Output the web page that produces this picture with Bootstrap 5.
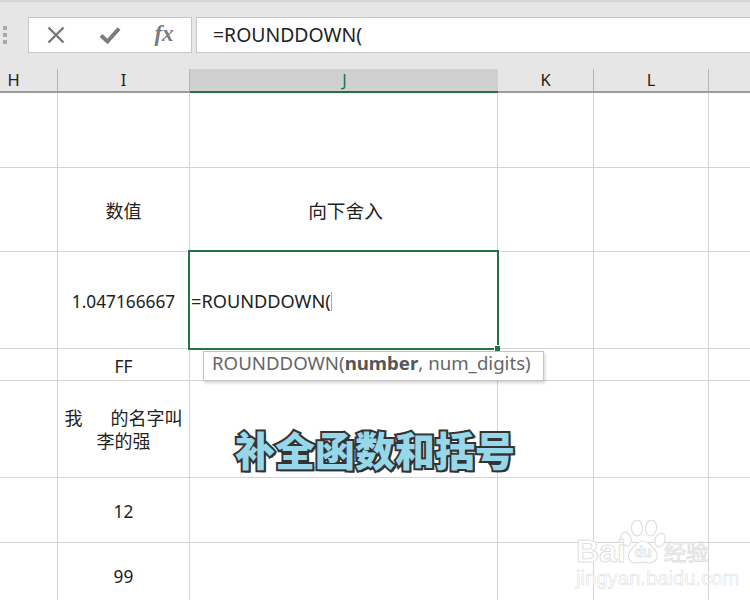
<!DOCTYPE html>
<html lang="zh">
<head>
<meta charset="utf-8">
<title>ROUNDDOWN</title>
<link href="https://cdn.jsdelivr.net/npm/bootstrap@5.3.0/dist/css/bootstrap.min.css" rel="stylesheet">
<style>
html,body{width:750px;height:600px;overflow:hidden;background:#fff;}
body{font-family:"Noto Sans","Noto Sans CJK SC",sans-serif;font-size:16px;color:#222;}
.ribbon{height:69px;background:#e6e6e6;border-top:2px solid #d4d4d4;padding:15px 0 16px 0;}
.grip{width:28px;gap:3px;padding-left:3px;}
.grip i{display:block;width:4px;height:4px;background:#a8a8a8;}
.fx-tools{width:164px;background:#fff;border:1px solid #c6c6c6;}
.fx-slot{width:54px;}
.fx-label{font-family:"Liberation Serif",serif;font-style:italic;font-weight:700;font-size:23px;color:#7a7a7a;line-height:1;margin-top:-3px;}
.fx-input{margin-left:4px;background:#fff;border:1px solid #c6c6c6;border-right:0;padding-left:16px;font-size:19.4px;color:#222;}
.heads,.rows{display:grid;grid-template-columns:58px 132px 308px 96px 115px 1fr;}
.heads{height:24px;grid-template-rows:22px;background:#e6e6e6;border-bottom:2px solid #9c9c9c;font-size:16.5px;line-height:1;color:#222;}
.heads>div{border-right:1px solid #b4b4b4;}
.heads .on{background:#d0d0d0;box-shadow:0 2px 0 #217346;color:#217346;border-right:0;}
.hd-h{padding-right:30px;}
.hd-j{padding-left:1px;}
.rows{grid-template-rows:75px 84px 97px 32px 97px 65px 65px;}
.rows>div{border-right:1px solid #d4d4d4;border-bottom:1px solid #d4d4d4;}
.rows>.last{border-right:0;}
.cellx{font-size:17.3px;line-height:23px;padding-top:3px;}
.cellx.cjk{font-size:18px;}
.cellx.wide{font-size:18.7px;padding-left:4px;padding-top:1px;}
.cellx.twoline{padding-top:1px;}
.picked{left:-2px;top:-2px;width:311px;height:100px;border:2px solid #217346;z-index:2;padding-left:1px;padding-top:3px;font-size:18.2px;}
.caret-line{display:inline-block;width:1px;height:19px;background:#aaa;vertical-align:-3px;}
.knob{right:-3px;bottom:-3px;width:6px;height:6px;background:#217346;border:1px solid #fff;border-right:0;border-bottom:0;}
.tipbox{left:203px;top:351px;width:341px;height:30px;background:#fff;border:1px solid #c4c4c4;box-shadow:1px 2px 3px rgba(0,0,0,.18);color:#666;font-size:18.65px;padding-left:8px;padding-bottom:7px;z-index:3;white-space:nowrap;}
.tipbox b{color:#555;}
.caption{left:235px;top:423px;font-family:"Noto Sans CJK SC",sans-serif;font-weight:900;font-size:40px;line-height:52px;color:#97d7ea;-webkit-text-stroke:4px #333;paint-order:stroke fill;text-shadow:2px 2px 0 #333;white-space:nowrap;z-index:4;}
.mark-wrap{left:576px;top:520px;width:134px;height:66px;z-index:1;}
.mark-bai,.mark-jing,.mark-cn{position:absolute;color:#fff;-webkit-text-stroke:1px #dfdfdf;white-space:nowrap;}
.mark-bai{left:0;top:15px;font-family:"Liberation Sans",sans-serif;font-weight:700;font-size:32px;line-height:32px;}
.mark-cn{left:88px;top:17px;font-family:"Noto Sans CJK SC",sans-serif;font-size:22px;line-height:26px;}
.mark-jing{left:0;top:48px;font-family:"Liberation Sans",sans-serif;font-size:20.3px;line-height:20px;-webkit-text-stroke:.6px #dfdfdf;}
.mark-paw{position:absolute;left:44px;top:0;}
</style>
</head>
<body class="position-relative">
<div class="ribbon d-flex">
  <div class="grip d-flex flex-column justify-content-center"><i></i><i></i><i></i></div>
  <div class="fx-tools d-flex align-items-center ps-0">
    <div class="fx-slot d-flex justify-content-center">
      <svg width="20" height="20" viewBox="0 0 20 20"><path d="M2.5 2.5 17.5 17.5M17.5 2.5 2.5 17.5" stroke="#777" stroke-width="2.4" fill="none"/></svg>
    </div>
    <div class="fx-slot d-flex justify-content-center">
      <svg width="22" height="20" viewBox="0 0 22 20"><path d="M2 10.5 8.5 16.5 20 3.5" stroke="#7c7c7c" stroke-width="4" fill="none"/></svg>
    </div>
    <div class="fx-slot d-flex justify-content-center"><span class="fx-label">fx</span></div>
  </div>
  <div class="fx-input flex-grow-1 d-flex align-items-center">=ROUNDDOWN(</div>
</div>
<div class="heads">
  <div class="hd-h d-flex align-items-center justify-content-center">H</div>
  <div class="d-flex align-items-center justify-content-center">I</div>
  <div class="on hd-j d-flex align-items-center justify-content-center">J</div>
  <div class="d-flex align-items-center justify-content-center">K</div>
  <div class="d-flex align-items-center justify-content-center">L</div>
  <div class="border-0"></div>
</div>
<div class="rows">
  <div></div><div></div><div></div><div></div><div></div><div class="last"></div>

  <div></div>
  <div class="cellx cjk d-flex align-items-center justify-content-center">数值</div>
  <div class="cellx cjk wide d-flex align-items-center justify-content-center">向下舍入</div>
  <div></div><div></div><div class="last"></div>

  <div></div>
  <div class="cellx d-flex align-items-center justify-content-center">1.047166667</div>
  <div class="position-relative">
    <div class="picked position-absolute d-flex align-items-center">=ROUNDDOWN(<span class="caret-line"></span><span class="knob position-absolute"></span></div>
  </div>
  <div></div><div></div><div class="last"></div>

  <div></div>
  <div class="cellx d-flex align-items-center justify-content-center">FF</div>
  <div></div><div></div><div></div><div class="last"></div>

  <div></div>
  <div class="cellx cjk twoline d-flex align-items-center justify-content-center text-center">
    <span>我&nbsp;&nbsp;&nbsp;&nbsp;&nbsp;&nbsp;的名字叫<br>李的强</span>
  </div>
  <div></div><div></div><div></div><div class="last"></div>

  <div></div>
  <div class="cellx d-flex align-items-center justify-content-center">12</div>
  <div></div><div></div><div></div><div class="last"></div>

  <div></div>
  <div class="cellx d-flex align-items-center justify-content-center">99</div>
  <div></div><div></div><div></div><div class="last"></div>
</div>

<div class="tipbox position-absolute d-flex align-items-center"><span>ROUNDDOWN(<b>number</b>, num_digits)</span></div>
<div class="caption position-absolute">补全函数和括号</div>
<div class="mark-wrap position-absolute">
  <svg class="mark-paw" width="46" height="46" viewBox="0 0 46 46" fill="#fff" stroke="#dfdfdf" stroke-width="1.2">
    <ellipse cx="6" cy="19" rx="5" ry="7" transform="rotate(-18 6 19)"/>
    <ellipse cx="17" cy="8" rx="5.5" ry="8"/>
    <ellipse cx="31" cy="8" rx="5.5" ry="8" transform="rotate(8 31 8)"/>
    <ellipse cx="40" cy="20" rx="5" ry="7" transform="rotate(18 40 20)"/>
    <path d="M23 21c6 0 8 5 12 9 5 6 1 13-6 13-3 0-4-1-6-1s-4 1-7 1c-7 0-10-7-5-13 4-4 6-9 12-9Z"/>
    <text x="23" y="37" text-anchor="middle" font-family="Liberation Sans, sans-serif" font-weight="700" font-size="14" stroke-width=".8">du</text>
  </svg>
  <span class="mark-bai">Bai</span>
  <span class="mark-cn">经验</span>
  <span class="mark-jing">jingyan.baidu.com</span>
</div>
<script src="https://cdn.jsdelivr.net/npm/bootstrap@5.3.0/dist/js/bootstrap.bundle.min.js"></script>
</body>
</html>
